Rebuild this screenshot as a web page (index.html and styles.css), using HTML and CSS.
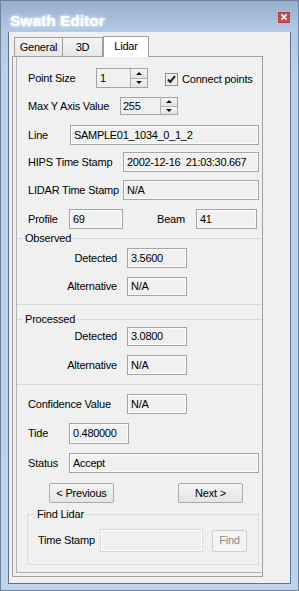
FILE: index.html
```html
<!DOCTYPE html>
<html>
<head>
<meta charset="utf-8">
<link rel="stylesheet" href="styles.css">
</head>
<body>
<div class="window">
  <div class="titlebar">
    <span class="title">Swath Editor</span>
    <span class="close"><svg width="12" height="11" viewBox="0 0 12 11"><path d="M4 3 L8 7 M8 3 L4 7" stroke="#fff" stroke-width="1.6" stroke-linecap="square"/></svg></span>
  </div>
  <div class="client">
    <div class="tabctl">
      <div class="tabstrip">
        <div class="tab t-general">General</div>
        <div class="tab t-3d">3D</div>
        <div class="tab t-lidar active">Lidar</div>
      </div>
      <div class="tabpanel">
        <div class="page">
          <div class="row r1">
            <span class="lbl w68">Point Size</span>
            <div class="spin sp1"><span class="sval">1</span><div class="sbtns"><span class="sb"><i class="up"></i></span><span class="sb"><i class="dn"></i></span></div></div>
            <div class="chk">
              <svg width="13" height="13" viewBox="0 0 13 13"><rect x="0.5" y="0.5" width="12" height="12" fill="#f4f4f4" stroke="#8f8f8f"/><rect x="2" y="2" width="9" height="9" fill="#e9e9e9"/><path d="M3 6.5 L5.2 9 L10 3.2" fill="none" stroke="#1e1e1e" stroke-width="2"/></svg>
              <span class="chktext">Connect points</span>
            </div>
          </div>
          <div class="row r2">
            <span class="lbl w92">Max Y Axis Value</span>
            <div class="spin sp2"><span class="sval">255</span><div class="sbtns"><span class="sb"><i class="up"></i></span><span class="sb"><i class="dn"></i></span></div></div>
          </div>
          <div class="row r3">
            <span class="lbl w42">Line</span>
            <div class="fld w189">SAMPLE01_1034_0_1_2</div>
          </div>
          <div class="row r4">
            <span class="lbl w95">HIPS Time Stamp</span>
            <div class="fld w136">2002-12-16&nbsp; 21:03:30.667</div>
          </div>
          <div class="row r5">
            <span class="lbl w95">LIDAR Time Stamp</span>
            <div class="fld w136">N/A</div>
          </div>
          <div class="row r6">
            <span class="lbl w41">Profile</span>
            <div class="fld w54">69</div>
            <span class="lbl beam">Beam</span>
            <div class="fld w61">41</div>
          </div>

          <div class="group g-obs">
            <div class="gtitle"><span>Observed</span></div>
            <div class="row ga">
              <span class="lbl rlbl">Detected</span>
              <div class="fld w60 gap10">3.5600</div>
            </div>
            <div class="row gb h19">
              <span class="lbl rlbl">Alternative</span>
              <div class="fld w60 gap10">N/A</div>
            </div>
          </div>

          <div class="group g-proc">
            <div class="gtitle"><span>Processed</span></div>
            <div class="row pa h19">
              <span class="lbl rlbl">Detected</span>
              <div class="fld w60 gap10">3.0800</div>
            </div>
            <div class="row gb">
              <span class="lbl rlbl">Alternative</span>
              <div class="fld w60 gap10">N/A</div>
            </div>
          </div>

          <div class="row rc">
            <span class="lbl w99">Confidence Value</span>
            <div class="fld w60">N/A</div>
          </div>
          <div class="row rt">
            <span class="lbl w41">Tide</span>
            <div class="fld w60">0.480000</div>
          </div>
          <div class="row rs">
            <span class="lbl w41">Status</span>
            <div class="fld w190">Accept</div>
          </div>
          <div class="row rb">
            <div class="btn prev">&lt; Previous</div>
            <div class="btn next">Next &gt;</div>
          </div>

          <div class="fgroup">
            <div class="ftitle"><span>Find Lidar</span></div>
            <div class="fbody">
              <span class="lbl w62">Time Stamp</span>
              <div class="fld dis"></div>
              <div class="btn find">Find</div>
            </div>
          </div>
        </div>
      </div>
    </div>
  </div>
</div>
</body>
</html>
```

FILE: styles.css
```css
* { box-sizing: border-box; }
html, body { margin: 0; padding: 0; }
body {
  width: 299px;
  height: 591px;
  overflow: hidden;
  font-family: "Liberation Sans", Arial, sans-serif;
  font-size: 11px;
  color: #000;
}
.window {
  width: 299px;
  height: 591px;
  border: 1px solid #6f839d;
  background: linear-gradient(#97afce 0px, #b3c9e4 31px, #bad1ea 70px, #bcd3eb 100%);
  padding: 0 7px 6px 7px;
  display: flex;
  flex-direction: column;
}
.titlebar {
  height: 31px;
  flex: none;
  display: flex;
  align-items: flex-start;
  padding: 11px 1px 0 2px;
}
.title {
  font-size: 15.5px;
  line-height: 18px;
  font-weight: bold;
  color: #fff;
  text-shadow: 0 0 5px rgba(255, 255, 255, 0.9), 0 0 2px rgba(230, 240, 255, 0.9);
}
.close {
  margin-left: auto;
  margin-top: 0;
  width: 12px;
  height: 11px;
  background: #c44f4f;
  border: 1px solid #a84444;
  display: flex;
}
.close svg { display: block; margin: -1px; }
.client {
  flex: 1;
  background: #f0f0f0;
  border: 1px solid #5b7392;
  border-top: none;
  padding: 4px 0 0 3px;
}
.tabctl { width: 251px; }
.tabstrip {
  height: 20px;
  display: flex;
  align-items: flex-end;
  padding-left: 2px;
}
.tab {
  height: 19px;
  border: 1px solid #a0a0a0;
  border-bottom: none;
  background: linear-gradient(#f4f4f4, #e7e7e7);
  text-align: center;
  line-height: 13px;
  padding-top: 3px;
  letter-spacing: -0.2px;
}
.t-general { width: 49px; }
.t-3d { width: 40px; border-left: none; }
.t-lidar { width: 46px; }
.tab.active {
  height: 21px;
  margin-bottom: -1px;
  background: #fff;
  position: relative;
  z-index: 1;
  padding-top: 3px;
}
.tabpanel {
  height: 521px;
  border: 1px solid #a0a0a0;
  padding: 0 0 3px 3px;
  overflow: hidden;
  background: #f0f0f0;
}
.page {
  width: 246px;
  height: 516px;
  border-left: 1px solid #b2b2b2;
  border-bottom: 1px solid #b2b2b2;
  display: flex;
  flex-direction: column;
}
.row {
  display: flex;
  align-items: center;
  padding-left: 11px;
  height: 20px;
  flex: none;
}
.lbl { line-height: 13px; white-space: nowrap; flex: none; letter-spacing: -0.2px; }
.w41 { width: 41px; }
.w42 { width: 42px; }
.w62 { width: 62px; }
.w68 { width: 68px; }
.w92 { width: 92px; }
.w95 { width: 95px; }
.w99 { width: 99px; }
.rlbl { width: 89px; text-align: right; }
.beam { margin-left: 34px; width: 39px; }

.r1 { margin-top: 11px; }
.r2 { margin-top: 9px; height: 18px; }
.r3 { margin-top: 10px; }
.r4 { margin-top: 7px; }
.r5 { margin-top: 8px; }
.r6 { margin-top: 9px; }
.h19 { height: 19px; }

.fld {
  height: 100%;
  border: 1px solid #a5a5a5;
  box-shadow: inset 0 0 0 1px #fbfbfb;
  background: #f0f0f0;
  padding-left: 3px;
  line-height: 13px;
  display: flex;
  align-items: center;
  letter-spacing: -0.3px;
  white-space: nowrap;
  flex: none;
}
.w54 { width: 54px; }
.w60 { width: 60px; }
.w61 { width: 61px; }
.w136 { width: 136px; }
.w189 { width: 189px; }
.w190 { width: 190px; }
.gap10 { margin-left: 10px; }

.spin {
  height: 100%;
  border: 1px solid #a5a5a5;
  background: #f0f0f0;
  display: flex;
  flex: none;
}
.sp1 { width: 52px; }
.sp2 { width: 58px; }
.sval { padding-left: 3px; line-height: 13px; align-self: center; letter-spacing: -0.3px; }
.sp2 .sval { padding-left: 2px; }
.sbtns {
  margin-left: auto;
  width: 17px;
  display: flex;
  flex-direction: column;
  border-left: 1px solid #b4b4b4;
}
.sb {
  flex: 1;
  display: flex;
  align-items: center;
  justify-content: center;
  background: linear-gradient(#f6f6f6, #e2e2e2);
}
.sb + .sb { border-top: 1px solid #b4b4b4; }
.up, .dn { width: 0; height: 0; border-left: 3px solid transparent; border-right: 3px solid transparent; }
.up { border-bottom: 3px solid #111; }
.dn { border-top: 3px solid #111; }

.chk {
  margin-left: 17px;
  margin-top: 3px;
  display: flex;
  align-items: center;
}
.chk svg { display: block; }
.chktext { margin-left: 4px; line-height: 13px; letter-spacing: -0.2px; }

.group {
  border-bottom: 1px solid #d5d7d9;
  flex: none;
}
.gtitle {
  display: flex;
  align-items: center;
  height: 13px;
}
.gtitle::before { content: ""; width: 6px; height: 1px; background: #d5d7d9; }
.gtitle::after { content: ""; flex: 1; height: 1px; background: #d5d7d9; }
.gtitle span { padding: 0 2px; line-height: 13px; letter-spacing: -0.2px; }
.g-obs { margin-top: 3px; padding-bottom: 8px; }
.g-obs .ga { margin-top: 3px; }
.g-obs .gb { margin-top: 9px; }
.g-proc { margin-top: 8px; padding-bottom: 9px; }
.g-proc .pa { margin-top: 1px; }
.g-proc .gb { margin-top: 9px; }

.rc { margin-top: 9px; }
.rt { margin-top: 9px; height: 21px; }
.rs { margin-top: 9px; }
.rb { margin-top: 10px; }

.btn {
  height: 100%;
  border: 1px solid #acacac;
  border-radius: 2px;
  background: linear-gradient(#f4f4f4, #e4e4e4);
  display: flex;
  align-items: center;
  justify-content: center;
  line-height: 13px;
  flex: none;
  letter-spacing: -0.2px;
}
.prev { width: 65px; margin-left: 21px; }
.next { width: 65px; margin-left: 64px; }

.fgroup { margin: 5px 0 0 10px; width: 232px; flex: none; }
.ftitle { display: flex; height: 13px; }
.ftitle::before { content: ""; width: 7px; margin-top: 6px; border-top: 1px solid #dcdcdc; border-left: 1px solid #dcdcdc; }
.ftitle::after { content: ""; flex: 1; margin-top: 6px; border-top: 1px solid #dcdcdc; border-right: 1px solid #dcdcdc; }
.ftitle span { padding: 0 2px; line-height: 13px; letter-spacing: -0.2px; }
.fbody {
  border: 1px solid #dcdcdc;
  border-top: none;
  padding: 8px 0 12px 10px;
  display: flex;
  align-items: center;
  height: 44px;
}
.fld.dis {
  width: 103px;
  height: 23px;
  border-color: #dadada;
  box-shadow: inset 0 0 0 1px #fff;
}
.find {
  width: 35px;
  height: 22px;
  margin-left: 9px;
  border-color: #d0d0d0;
  background: #f4f4f4;
  color: #8b8b8b;
}
```
